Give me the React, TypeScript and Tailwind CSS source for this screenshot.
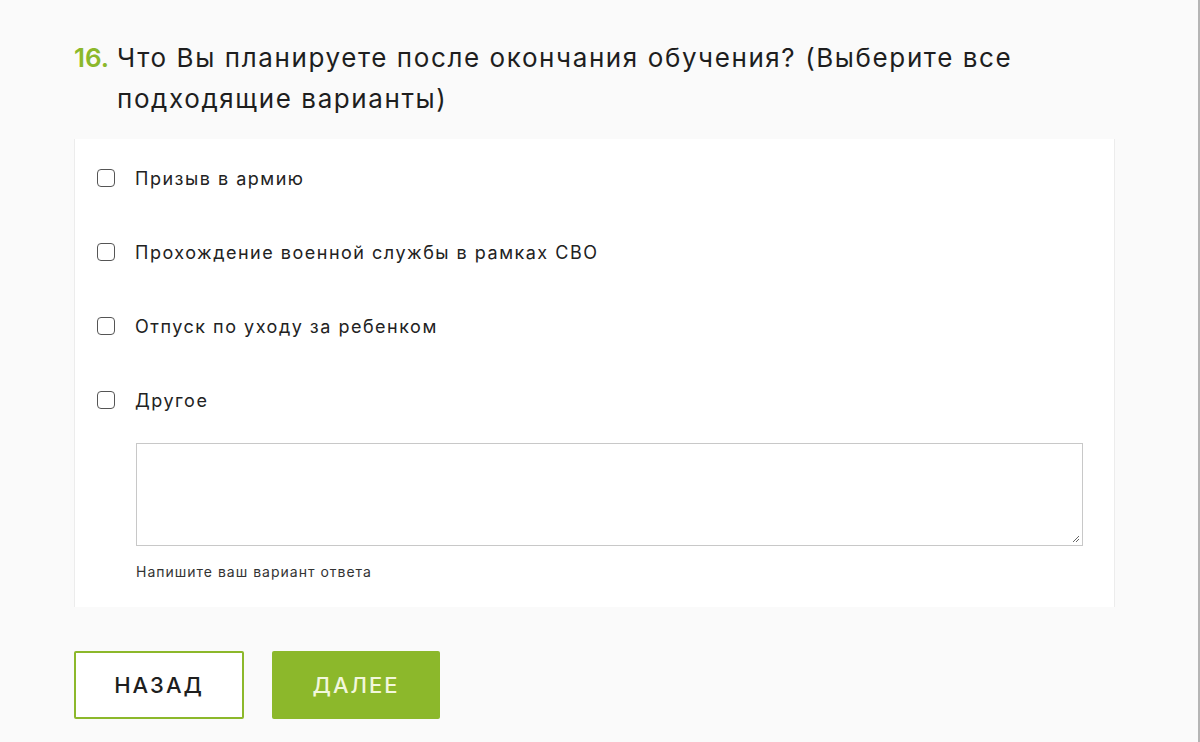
import React from "react";

const options = [
  "Призыв в армию",
  "Прохождение военной службы в рамках СВО",
  "Отпуск по уходу за ребенком",
  "Другое",
];

function Box() {
  return <span className="block h-[18px] w-[18px] shrink-0 rounded-[4px] border-[1.5px] border-[#555] bg-white" />;
}

export default function App() {
  return (
    <div className="flex h-[742px] w-[1200px] bg-[#fafafa]" style={{ fontFamily: "Inter, 'Open Sans', sans-serif" }}>
      <div className="flex-1 pl-[74px] pt-[37px]">
        <div className="flex text-[26px] leading-[41px] text-[#1e1e1e]">
          <span className="w-[43px] shrink-0 font-semibold text-[#8cb82b]">16.</span>
          <span className="w-[960px] tracking-[1.6px]">Что Вы планируете после окончания обучения? (Выберите все подходящие варианты)</span>
        </div>
        <div className="mt-[20px] w-[1041px] border-x border-[#ececec] bg-white pl-[22px] pr-[31px] pt-[28px] pb-[25px]">
          <div className="flex flex-col gap-[52px]">
            {options.map((o) => (
              <label key={o} className="flex h-[22px] items-center gap-[20px] text-[18px] tracking-[1.5px] text-[#222]">
                <Box />
                <span>{o}</span>
              </label>
            ))}
          </div>
          <div className="ml-[39px] mt-[32px]">
            <div className="relative h-[103px] border border-[#c8c8c8] bg-white">
              <svg className="absolute bottom-[2px] right-[2px]" width="10" height="10" viewBox="0 0 10 10">
                <path d="M9 3 L3 9 M9 6 L6 9" stroke="#666" strokeWidth="1" />
              </svg>
            </div>
            <div className="mt-[15px] text-[14px] tracking-[1px] text-[#333]">Напишите ваш вариант ответа</div>
          </div>
        </div>
        <div className="mt-[44px] flex gap-[28px]">
          <button className="flex h-[68px] w-[170px] items-center justify-center rounded-[2px] border-2 border-[#8cb82b] bg-white text-[22px] font-medium tracking-[2px] text-[#1e1e1e]">
            НАЗАД
          </button>
          <button className="flex h-[68px] w-[168px] items-center justify-center rounded-[2px] bg-[#8cb82b] text-[22px] font-medium tracking-[2px] text-[#f2f7dc]">
            ДАЛЕЕ
          </button>
        </div>
      </div>
      <div className="w-[2px] bg-[#b5b5b5]" />
    </div>
  );
}
